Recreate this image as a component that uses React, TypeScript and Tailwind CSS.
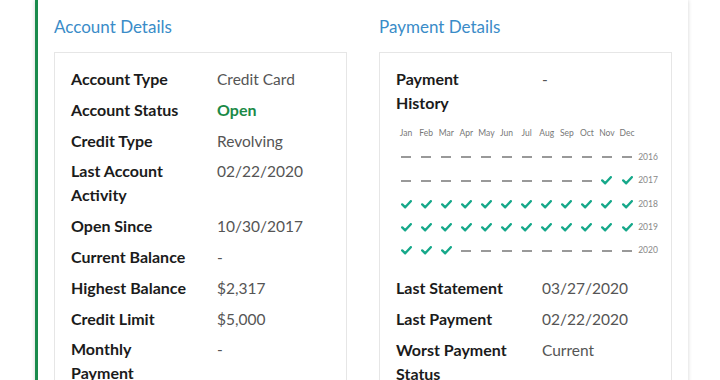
import React from "react";

const months = ["Jan", "Feb", "Mar", "Apr", "May", "Jun", "Jul", "Aug", "Sep", "Oct", "Nov", "Dec"];

// 1 = paid on time, 0 = no data
const history: { year: string; marks: number[] }[] = [
  { year: "2016", marks: [0, 0, 0, 0, 0, 0, 0, 0, 0, 0, 0, 0] },
  { year: "2017", marks: [0, 0, 0, 0, 0, 0, 0, 0, 0, 0, 1, 1] },
  { year: "2018", marks: [1, 1, 1, 1, 1, 1, 1, 1, 1, 1, 1, 1] },
  { year: "2019", marks: [1, 1, 1, 1, 1, 1, 1, 1, 1, 1, 1, 1] },
  { year: "2020", marks: [1, 1, 1, 0, 0, 0, 0, 0, 0, 0, 0, 0] },
];

const accountRows: { label: string; value: string; green?: boolean }[] = [
  { label: "Account Type", value: "Credit Card" },
  { label: "Account Status", value: "Open", green: true },
  { label: "Credit Type", value: "Revolving" },
  { label: "Last Account Activity", value: "02/22/2020" },
  { label: "Open Since", value: "10/30/2017" },
  { label: "Current Balance", value: "-" },
  { label: "Highest Balance", value: "$2,317" },
  { label: "Credit Limit", value: "$5,000" },
  { label: "Monthly Payment", value: "-" },
];

const paymentRows = [
  { label: "Last Statement", value: "03/27/2020" },
  { label: "Last Payment", value: "02/22/2020" },
  { label: "Worst Payment Status", value: "Current" },
];

const Check = () => (
  <svg width="11" height="9" viewBox="0 0 11 9" fill="none">
    <path d="M1.2 4.4 L4.2 7.3 L9.8 1.2" stroke="#16a88a" strokeWidth="2.4" strokeLinecap="round" strokeLinejoin="round" />
  </svg>
);

const Row = ({ label, value, green }: { label: string; value: string; green?: boolean }) => (
  <div className="flex leading-6">
    <div className="w-[146px] shrink-0 pr-[27px] text-[16px] font-bold text-[#1b1b1b]">{label}</div>
    <div className={green ? "text-[16px] font-bold text-[#1b8a47]" : "text-[15.5px] text-[#555]"}>{value}</div>
  </div>
);

export default function App() {
  return (
    <div className="h-[380px] w-[720px] overflow-hidden bg-white font-['Lato',sans-serif]">
      <div className="ml-[35px] w-[653px] min-h-[420px] border-l-[3px] border-[#1a8a4c] bg-white pl-4 pr-4 pt-[15px] shadow-[0_0_4px_rgba(0,0,0,0.18)]">
        <div className="grid grid-cols-2 gap-8">
          {/* Account Details */}
          <div>
            <h3 className="text-[17px] leading-6 text-[#3a8cc8]">Account Details</h3>
            <div className="mt-[13px] flex flex-col gap-[6.8px] border border-[#e6e6e6] px-4 pt-[14px] pb-4">
              {accountRows.map((r) => (
                <Row key={r.label} {...r} />
              ))}
            </div>
          </div>

          {/* Payment Details */}
          <div>
            <h3 className="text-[17px] leading-6 text-[#3a8cc8]">Payment Details</h3>
            <div className="mt-[13px] flex flex-col gap-[6.8px] border border-[#e6e6e6] px-4 pt-[14px] pb-4">
              <Row label="Payment History" value="-" />
              <div className="mt-[5px] mb-[7px]">
                <div className="grid h-3 grid-cols-[repeat(12,20.1px)_auto] items-center text-[8.5px] leading-3 text-[#777]">
                  {months.map((m) => (
                    <span key={m} className="text-center">{m}</span>
                  ))}
                  <span />
                </div>
                <div className="mt-[7px]">
                  {history.map((h) => (
                    <div key={h.year} className="grid h-[23.3px] grid-cols-[repeat(12,20.1px)_auto] items-center">
                      {h.marks.map((m, i) => (
                        <div key={i} className="flex justify-center">
                          {m ? <Check /> : <div className="h-[2px] w-[10px] bg-[#999]" />}
                        </div>
                      ))}
                      <span className="pl-[1px] text-[8.5px] text-[#888]">{h.year}</span>
                    </div>
                  ))}
                </div>
              </div>
              {paymentRows.map((r) => (
                <Row key={r.label} {...r} />
              ))}
            </div>
          </div>
        </div>
      </div>
    </div>
  );
}
